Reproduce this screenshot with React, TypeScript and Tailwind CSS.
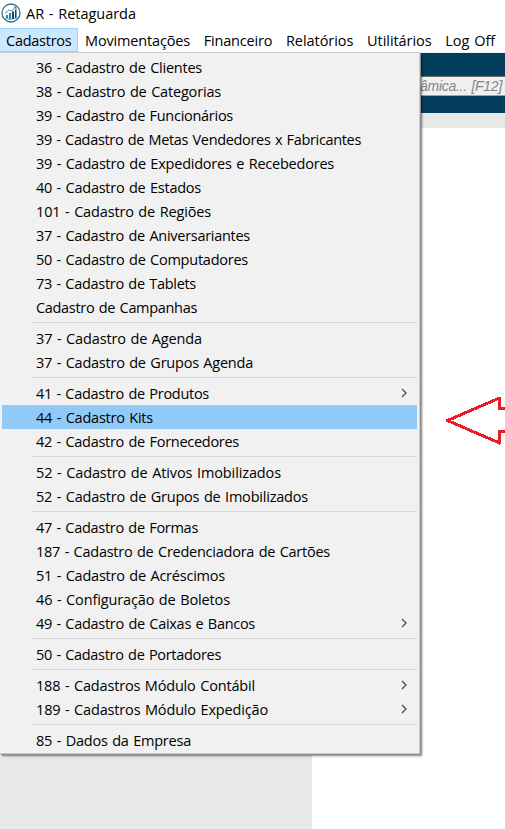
import { useLayoutEffect, useRef } from 'react';

function Label({ text, width }: { text: string; width: number }) {
  const ref = useRef<HTMLSpanElement>(null);
  useLayoutEffect(() => {
    const el = ref.current;
    if (!el) return;
    el.style.letterSpacing = '0px';
    const natural = el.getBoundingClientRect().width;
    el.style.letterSpacing = `${(width - natural) / text.length}px`;
  }, [text, width]);
  return (
    <span ref={ref} className="inline-block whitespace-pre [word-spacing:1px]">
      {text}
    </span>
  );
}

type Item = { text: string; width: number; sub?: boolean; active?: boolean };

const groups: Item[][] = [
  [
    { text: '36 - Cadastro de Clientes', width: 166 },
    { text: '38 - Cadastro de Categorias', width: 185 },
    { text: '39 - Cadastro de Funcionários', width: 197 },
    { text: '39 - Cadastro de Metas Vendedores x Fabricantes', width: 325 },
    { text: '39 - Cadastro de Expedidores e Recebedores', width: 298 },
    { text: '40 - Cadastro de Estados', width: 165 },
    { text: '101 - Cadastro de Regiões', width: 175 },
    { text: '37 - Cadastro de Aniversariantes', width: 214 },
    { text: '50 - Cadastro de Computadores', width: 212 },
    { text: '73 - Cadastro de Tablets', width: 160 },
    { text: 'Cadastro de Campanhas', width: 161 },
  ],
  [
    { text: '37 - Cadastro de Agenda', width: 166 },
    { text: '37 - Cadastro de Grupos Agenda', width: 217 },
  ],
  [
    { text: '41 - Cadastro de Produtos', width: 173, sub: true },
    { text: '44 - Cadastro Kits', width: 117, active: true },
    { text: '42 - Cadastro de Fornecedores', width: 203 },
  ],
  [
    { text: '52 - Cadastro de Ativos Imobilizados', width: 245 },
    { text: '52 - Cadastro de Grupos de Imobilizados', width: 272 },
  ],
  [
    { text: '47 - Cadastro de Formas', width: 162 },
    { text: '187 - Cadastro de Credenciadora de Cartões', width: 294 },
    { text: '51 - Cadastro de Acréscimos', width: 189 },
    { text: '46 - Configuração de Boletos', width: 194 },
    { text: '49 - Cadastro de Caixas e Bancos', width: 219, sub: true },
  ],
  [{ text: '50 - Cadastro de Portadores', width: 185 }],
  [
    { text: '188 - Cadastros Módulo Contábil', width: 219, sub: true },
    { text: '189 - Cadastros Módulo Expedição', width: 232, sub: true },
  ],
  [{ text: '85 - Dados da Empresa', width: 155 }],
];

const menus = [
  { text: 'Movimentações', width: 105 },
  { text: 'Financeiro', width: 68.5 },
  { text: 'Relatórios', width: 67.5 },
  { text: 'Utilitários', width: 64.5 },
  { text: 'Log Off', width: 50 },
];

function AppIcon() {
  return (
    <svg width="20" height="20" viewBox="0 0 20 20" fill="none">
      <circle cx="10" cy="10" r="9" stroke="#2d718f" strokeWidth="1.3" />
      <path d="M5 12h2v3H5zM8 10h2v6H8z" fill="#168bb9" />
      <path d="M11 8.5h2V16h-2zM14 6.5h1.5V15H14z" fill="#123f60" />
      <path d="M4 10.5 8 7l2.5 1L15 4M12.8 4H15v2" stroke="#306780" strokeWidth=".8" />
      <path d="M4 15.5q6 2 12-.5" stroke="#45849d" strokeWidth=".8" />
    </svg>
  );
}

export default function App() {
  return (
    <div className="relative h-[829px] w-[505px] overflow-hidden bg-white font-['Open_Sans','Noto_Sans',sans-serif] text-[14.5px] text-black">
      <header className="flex h-7 items-center gap-[5px] pl-px leading-7">
        <div className="pb-[3px]"><AppIcon /></div>
        <Label text="AR - Retaguarda" width={110} />
      </header>
      <nav className="flex h-6 leading-6">
        <div className="h-6 w-[78px] border border-l-0 border-[#99d1ff] bg-[#cce8ff] pl-1.5 leading-[24px]">
          <Label text="Cadastros" width={65.5} />
        </div>
        <div className="flex gap-[13.7px] pl-[7px] pt-px">
          {menus.map((m) => <Label key={m.text} {...m} />)}
        </div>
      </nav>
      <div className="h-px bg-[#f0f0f0]" />
      <div className="flex h-[60px] flex-col bg-[#043e5d] pt-[23px]">
        <div className="h-5 border-y border-t-[#696969] border-b-[#a0a0a0] bg-[#f0f0f0] pl-[420px] font-['Liberation_Sans',sans-serif] text-sm italic leading-[19px] text-[#858585]">
          <Label text="âmica... [F12]" width={82} />
        </div>
      </div>
      <div className="h-[15px] bg-[#e8e8e8]" />
      <div className="h-[701px] w-[312px] bg-[#e8e8e8]" />

      <div className="absolute left-0 top-[52px] h-[702px] w-[420px] border border-l-0 border-[#cccccc] bg-[#f1f1f1] pt-0.5 shadow-[1px_1px_0_#8c8c8c,2px_2px_2px_rgba(0,0,0,0.5)]">
        {groups.map((group, i) => (
          <div key={i}>
            {i > 0 && (
              <div className="h-[7px] pl-8 pr-0.5 pt-[3px]">
                <div className="h-px bg-[#d7d7d7]" />
              </div>
            )}
            {group.map((item) => (
              <div
                key={item.text}
                className={`ml-0.5 mr-0.5 flex h-6 items-center justify-between pl-[34px] pr-[9px] leading-6 ${item.active ? 'bg-[#91c9f7]' : ''}`}
              >
                <div className="pt-0.5">
                  <Label text={item.text} width={item.width} />
                </div>
                {item.sub && (
                  <svg width="7" height="10" viewBox="0 0 7 10" fill="none" className="mb-px">
                    <path d="m1 1 4 4-4 4" stroke="#444" strokeWidth="1.2" />
                  </svg>
                )}
              </div>
            ))}
          </div>
        ))}
      </div>

      <svg className="absolute left-[440px] top-[390px]" width="65" height="65" viewBox="0 0 65 65" fill="none">
        <path d="M65 18.5h-5.5V8L7.5 30.5 59.5 53V41.5H65" stroke="#ed1c24" strokeWidth="3" strokeLinejoin="round" shapeRendering="crispEdges" />
      </svg>
    </div>
  );
}
